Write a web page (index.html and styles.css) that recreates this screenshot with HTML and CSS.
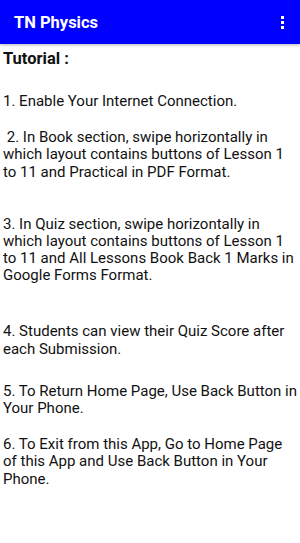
FILE: index.html
```html
<!DOCTYPE html>
<html lang="en">
<head>
    <meta charset="UTF-8">
    <meta name="viewport" content="width=device-width, initial-scale=1.0">
    <title>TN Physics</title>
    <link rel="stylesheet" href="styles.css">
</head>
<body>
    <!-- Barra superior -->
    <div class="app-bar">
        <div class="app-title">TN Physics</div>
        <div class="menu-dots">
            <span></span>
            <span></span>
            <span></span>
        </div>
    </div>

    <!-- Tutorial -->
    <div class="content">
        <h1 class="heading">Tutorial :</h1>
        <p class="step step-1">1. Enable Your Internet Connection.</p>
        <p class="step step-2">&nbsp;2. In Book section, swipe horizontally in which layout contains buttons of Lesson 1 to 11 and Practical in PDF Format.</p>
        <p class="step step-3">3. In Quiz section, swipe horizontally in which layout contains buttons of Lesson 1 to 11 and All Lessons Book Back 1 Marks in Google Forms Format.</p>
        <p class="step step-4">4. Students can view their Quiz Score after each Submission.</p>
        <p class="step step-5">5. To Return Home Page, Use Back Button in Your Phone.</p>
        <p class="step step-6">6. To Exit from this App, Go to Home Page of this App and Use Back Button in Your Phone.</p>
    </div>
</body>
</html>
```

FILE: styles.css
```css
body {
    margin: 0;
    font-family: Roboto, "Noto Sans", sans-serif;
    background-color: #fff;
    color: #111;
}
.app-bar {
    display: flex;
    justify-content: space-between;
    align-items: center;
    height: 44px;
    padding: 0 14px;
    background-color: #0000ff;
    box-shadow: 0 1px 3px rgba(0, 0, 0, 0.3);
}
.app-title {
    color: #fff;
    font-size: 16.5px;
    font-weight: bold;
}
.menu-dots {
    display: flex;
    flex-direction: column;
    gap: 2px;
    margin-right: 2px;
}
.menu-dots span {
    width: 3px;
    height: 3px;
    background-color: #fff;
}

/* Texto del tutorial */
.content {
    padding: 0 2px 0 3px;
}
.heading {
    margin: 0;
    padding-top: 5px;
    font-size: 16.5px;
    line-height: 20px;
    font-weight: bold;
}
.step {
    margin: 0;
    font-size: 15px;
    line-height: 17.3px;
}
.step-1 { margin-top: 24px; }
.step-2 { margin-top: 18.7px; }
.step-3 { margin-top: 34.7px; }
.step-4 { margin-top: 38.7px; }
.step-5 { margin-top: 24.7px; }
.step-6 { margin-top: 18.7px; }
```
